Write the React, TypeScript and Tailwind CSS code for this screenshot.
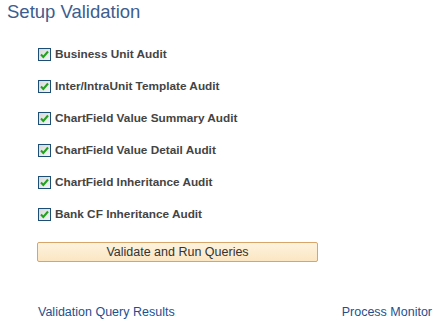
import React from "react";

const items = [
  "Business Unit Audit",
  "Inter/IntraUnit Template Audit",
  "ChartField Value Summary Audit",
  "ChartField Value Detail Audit",
  "ChartField Inheritance Audit",
  "Bank CF Inheritance Audit",
];

function Check() {
  return (
    <svg width="13" height="13" viewBox="0 0 13 13" className="shrink-0">
      <defs>
        <linearGradient id="cbg" x1="0" y1="0" x2="1" y2="1">
          <stop offset="0" stopColor="#d8d8d8" />
          <stop offset="1" stopColor="#f6f6f6" />
        </linearGradient>
      </defs>
      <rect x="0.5" y="0.5" width="12" height="12" fill="url(#cbg)" stroke="#1d4f76" />
      <path d="M3 6.5 L5.3 9 L10 3.5" fill="none" stroke="#21a11f" strokeWidth="2" />
    </svg>
  );
}

export default function App() {
  return (
    <div className="w-[437px] h-[322px] bg-white relative" style={{ fontFamily: '"Liberation Sans", Arial, sans-serif' }}>
      <div className="pl-[7px] pt-[0px] text-[18.5px] leading-[24px] text-[#3c5d8e]">Setup Validation</div>
      <div className="flex flex-col pl-[38px] pt-[24px] gap-[19px]">
        {items.map((t) => (
          <div key={t} className="flex items-center gap-[4px] h-[13px]">
            <Check />
            <span className="text-[11.8px] font-bold text-[#444] leading-[13px]">{t}</span>
          </div>
        ))}
      </div>
      <div className="pl-[37px] pt-[18px]">
        <button className="w-[281px] h-[20px] border border-[#d9a468] rounded-[2px] bg-gradient-to-b from-[#fdf3df] to-[#fbe6c2] text-[12.5px] text-[#333] leading-[18px]">
          Validate and Run Queries
        </button>
      </div>
      <div className="flex justify-between pl-[38px] pr-[5px] pt-[42px] text-[12.5px] leading-[14px] text-[#1f4f8f]">
        <span>Validation Query Results</span>
        <span>Process Monitor</span>
      </div>
    </div>
  );
}
